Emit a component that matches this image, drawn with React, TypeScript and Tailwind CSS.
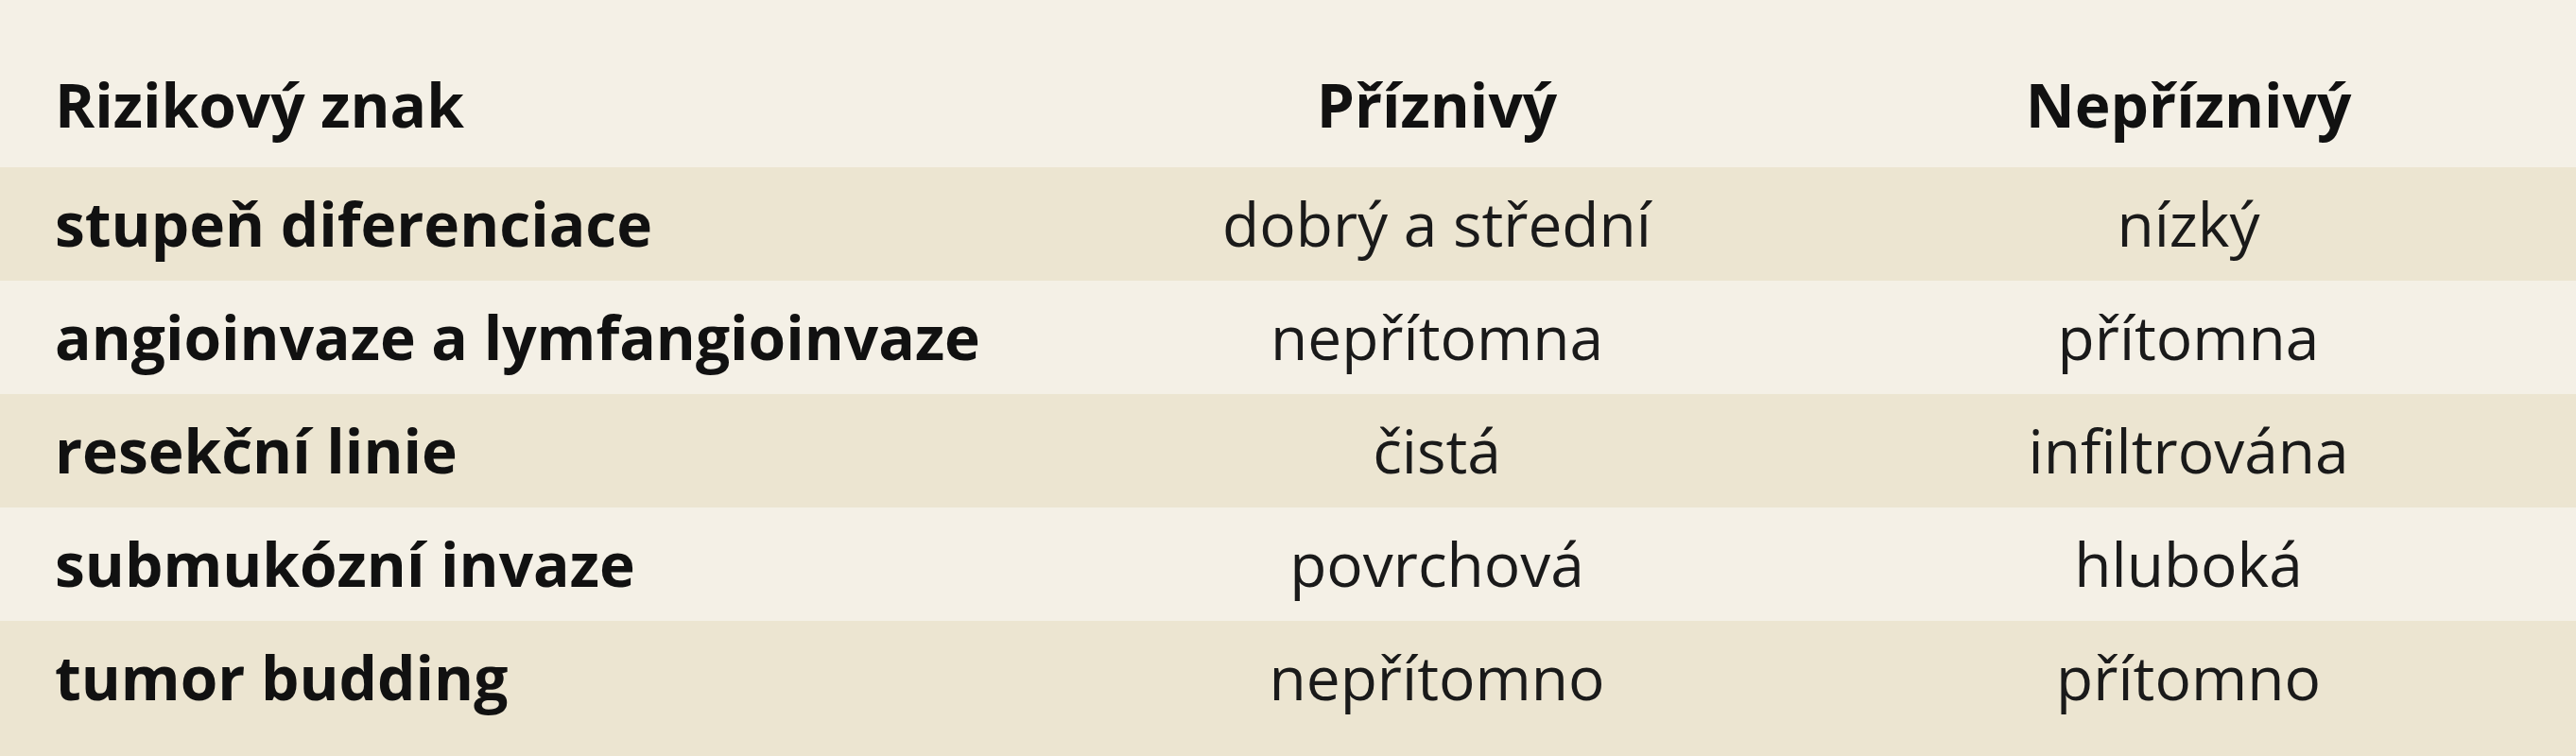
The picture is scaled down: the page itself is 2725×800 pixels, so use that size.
import React from "react";

const rows: [string, string, string][] = [
  ["stupeň diferenciace", "dobrý a střední", "nízký"],
  ["angioinvaze a lymfangioinvaze", "nepřítomna", "přítomna"],
  ["resekční linie", "čistá", "infiltrována"],
  ["submukózní invaze", "povrchová", "hluboká"],
  ["tumor budding", "nepřítomno", "přítomno"],
];

export default function App() {
  return (
    <div
      className="w-[2725px] h-[800px] overflow-hidden bg-[#f4f0e6] text-[64px] text-[#111111] whitespace-nowrap"
      style={{ fontFamily: '"Open Sans", "Noto Sans", sans-serif' }}
    >
      <div className="grid grid-cols-[1135px_770px_820px] h-[177px] items-end pb-[18px] font-bold">
        <div className="pl-[58px]">Rizikový znak</div>
        <div className="text-center">Příznivý</div>
        <div className="text-center">Nepříznivý</div>
      </div>
      {rows.map((r, i) => {
        const last = i === rows.length - 1;
        return (
          <div
            key={r[0]}
            className={
              "grid grid-cols-[1135px_770px_820px] " +
              (i % 2 === 0 ? "bg-[#ece5d1] " : "bg-[#f4f0e6] ") +
              (last ? "h-[143px] pb-[23px] items-center" : "h-[120px] items-center")
            }
          >
            <div className="pl-[58px] font-bold">{r[0]}</div>
            <div className="text-center text-[#1a1a1a]">{r[1]}</div>
            <div className="text-center text-[#1a1a1a]">{r[2]}</div>
          </div>
        );
      })}
    </div>
  );
}
